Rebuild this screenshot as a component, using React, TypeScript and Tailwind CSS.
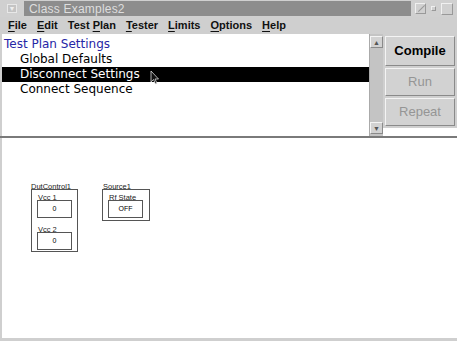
import React from 'react';

const menus = [
  { pre: '', u: 'F', post: 'ile' },
  { pre: '', u: 'E', post: 'dit' },
  { pre: 'Test ', u: 'P', post: 'lan' },
  { pre: '', u: 'T', post: 'ester' },
  { pre: '', u: 'L', post: 'imits' },
  { pre: '', u: 'O', post: 'ptions' },
  { pre: '', u: 'H', post: 'elp' },
];

function Bevel({ children, className = '' }: { children?: React.ReactNode; className?: string }) {
  return (
    <div
      className={`border border-t-[#f4f4f4] border-l-[#f4f4f4] border-b-[#8a8a8a] border-r-[#8a8a8a] bg-[#d2d2d2] ${className}`}
    >
      {children}
    </div>
  );
}

function Field({ label, value, top, left }: { label: string; value: string; top: number; left: number }) {
  return (
    <div className="absolute" style={{ top, left }}>
      <div className="text-[7.5px] leading-[8px] text-[#222] -mb-[2px] pl-[1px]">{label}</div>
      <div className="w-[35px] h-[18px] border border-[#555] flex items-center justify-center text-[7px] text-black">
        {value}
      </div>
    </div>
  );
}

export default function App() {
  return (
    <div
      className="w-[457px] h-[341px] bg-[#cfcfcf] flex flex-col overflow-hidden"
      style={{ fontFamily: '"Liberation Sans", Arial, sans-serif' }}
    >
      {/* title bar */}
      <div className="h-[17px] flex items-center bg-[#d0d0d0]">
        <div className="w-[24px] flex justify-center">
          <div className="w-[10px] h-[9px] border border-[#e8e8e8] bg-[#c4c4c4] flex items-center justify-center text-[7px] leading-none text-[#eee]">▼</div>
        </div>
        <div className="flex-1 h-[15px] bg-[#8d8d8d] flex items-center pl-[5px] text-[12px] text-[#dedede] tracking-[0.2px]">
          Class Examples2
        </div>
        <div className="flex items-center gap-[5px] px-[4px]">
          <div className="w-[11px] h-[11px] border border-[#f0f0f0] border-r-[#999] border-b-[#999] relative">
            <div className="absolute left-[1px] top-[4px] w-[9px] h-px bg-[#999] rotate-[-45deg]" />
          </div>
          <div className="w-[5px] h-[5px] border border-[#f0f0f0] border-r-[#999] border-b-[#999]" />
          <div className="w-[12px] h-[12px] border border-[#f0f0f0] border-r-[#999] border-b-[#999]" />
        </div>
      </div>

      {/* menu bar */}
      <div className="h-[17px] flex items-center gap-[10px] pl-[8px] text-[11px] font-bold text-[#111]">
        {menus.map((m) => (
          <span key={m.pre + m.u}>
            {m.pre}
            <span className="underline underline-offset-2">{m.u}</span>
            {m.post}
          </span>
        ))}
      </div>

      {/* top area */}
      <div className="h-[102px] flex pl-[2px]">
        <div className="flex-1 bg-white flex">
          <div
            className="flex-1 pt-[3px] text-[12px] leading-[15px]"
            style={{ fontFamily: '"DejaVu Sans", sans-serif' }}
          >
            <div className="pl-[2px] text-[#2626a6]">Test Plan Settings</div>
            <div className="pl-[18px] text-black">Global Defaults</div>
            <div className="pl-[18px] bg-black text-white relative">
              Disconnect Settings
              <svg className="absolute left-[148px] top-[3px]" width="10" height="15" viewBox="0 0 10 15">
                <path d="M1 1 L1 12 L3.5 9.5 L5.5 14 L7 13.3 L5 9 L8.5 9 Z" fill="#111" stroke="#ddd" strokeWidth="0.8" />
              </svg>
            </div>
            <div className="pl-[18px] text-black">Connect Sequence</div>
          </div>
          {/* scrollbar */}
          <div className="w-[14px] bg-[#c4c4c4] border-l border-[#aaa] flex flex-col justify-between py-[2px]">
            <Bevel className="h-[12px] flex items-center justify-center text-[7px] text-[#555] leading-none">▲</Bevel>
            <Bevel className="h-[12px] flex items-center justify-center text-[7px] text-[#555] leading-none">▼</Bevel>
          </div>
        </div>
        <div className="w-[74px] flex flex-col">
          <div className="flex flex-col gap-[2px] pt-[2px] px-[2px] bg-[#cfcfcf] pb-[2px]">
            <Bevel className="h-[30px] flex items-center justify-center text-[13px] font-bold text-black">Compile</Bevel>
            <Bevel className="h-[28px] flex items-center justify-center text-[13px] text-[#959595]">Run</Bevel>
            <Bevel className="h-[28px] flex items-center justify-center text-[13px] text-[#959595]">Repeat</Bevel>
          </div>
          <div className="flex-1 bg-white" />
        </div>
      </div>

      <div className="h-[2px] bg-[#7a7a7a]" />

      {/* canvas */}
      <div className="flex-1 pl-[2px] pb-[3px]">
        <div className="h-full bg-white relative text-black">
          <div className="absolute left-[29px] top-[45px] text-[7.5px] leading-[8px] text-[#222]">DutControl1</div>
          <div className="absolute left-[29px] top-[51px] w-[47px] h-[63px] border border-[#555]" />
          <Field label="Vcc 1" value="0" top={56} left={35} />
          <Field label="Vcc 2" value="0" top={88} left={35} />

          <div className="absolute left-[101px] top-[45px] text-[7.5px] leading-[8px] text-[#222]">Source1</div>
          <div className="absolute left-[100px] top-[51px] w-[48px] h-[32px] border border-[#555]" />
          <Field label="Rf State" value="OFF" top={56} left={106} />
        </div>
      </div>
    </div>
  );
}
